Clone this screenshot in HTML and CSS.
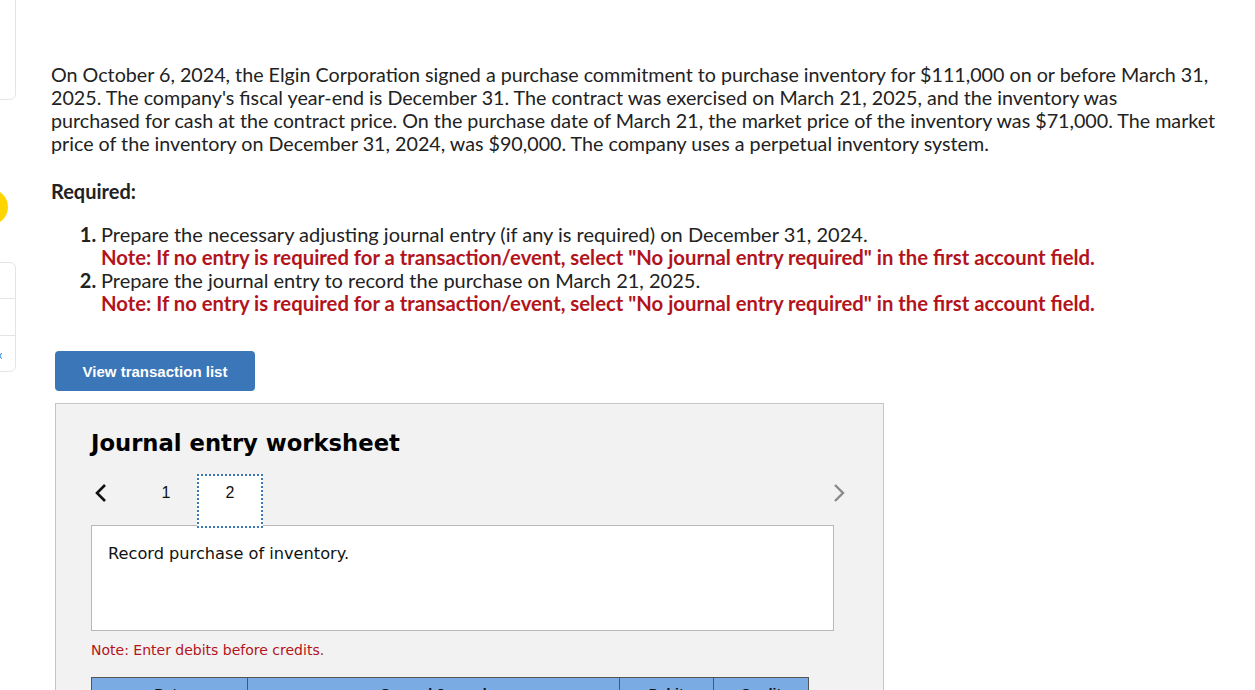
FILE: index.html
```html
<!DOCTYPE html>
<html lang="en">
<head>
    <meta charset="UTF-8">
    <title>Purchase Commitment - Journal Entry</title>
    <link rel="stylesheet" href="styles.css">
</head>
<body>
    <!-- side rail, mostly off screen -->
    <div class="rail">
        <div class="rail-card rail-top"></div>
        <div class="rail-dot"></div>
        <div class="rail-card rail-list">
            <div class="rail-row"></div>
            <div class="rail-row"></div>
            <div class="rail-row rail-last"><span class="rail-arrow">&lsaquo;</span></div>
        </div>
    </div>

    <main class="question">
        <p class="intro">On October 6, 2024, the Elgin Corporation signed a purchase commitment to purchase inventory for $111,000 on or before March 31, 2025. The company's fiscal year-end is December 31. The contract was exercised on March 21, 2025, and the inventory was<br>purchased for cash at the contract price. On the purchase date of March 21, the market price of the inventory was $71,000. The market price of the inventory on December 31, 2024, was $90,000. The company uses a perpetual inventory system.</p>

        <p class="required">Required:</p>
        <ol class="tasks">
            <li>Prepare the necessary adjusting journal entry (if any is required) on December 31, 2024.
                <span class="task-note">Note: If no entry is required for a transaction/event, select "No journal entry required" in the first account field.</span>
            </li>
            <li>Prepare the journal entry to record the purchase on March 21, 2025.
                <span class="task-note">Note: If no entry is required for a transaction/event, select "No journal entry required" in the first account field.</span>
            </li>
        </ol>

        <button class="btn-list" type="button">View transaction list</button>

        <section class="worksheet">
            <h2>Journal entry worksheet</h2>
            <div class="tabs">
                <span class="nav-prev">
                    <svg width="14" height="20" viewBox="0 0 14 20"><path d="M11 2 L3 10 L11 18" fill="none" stroke="#111" stroke-width="2.6"/></svg>
                </span>
                <span class="tab">1</span>
                <span class="tab tab-active">2</span>
                <span class="nav-next">
                    <svg width="14" height="20" viewBox="0 0 14 20"><path d="M3 2 L11 10 L3 18" fill="none" stroke="#8a8a8a" stroke-width="2.4"/></svg>
                </span>
            </div>
            <div class="entry-box">Record purchase of inventory.</div>
            <p class="ws-note">Note: Enter debits before credits.</p>
            <table class="journal">
                <thead>
                    <tr>
                        <th class="col-date">Date</th>
                        <th class="col-account">General Journal</th>
                        <th class="col-debit">Debit</th>
                        <th class="col-credit">Credit</th>
                    </tr>
                </thead>
            </table>
        </section>
    </main>
</body>
</html>
```

FILE: styles.css
```css
body {
    margin: 0;
    background-color: #fff;
    font-family: Lato, "Open Sans", sans-serif;
    color: #222;
    overflow: hidden;
}

/* left rail */
.rail {
    position: fixed;
    top: 0;
    left: 0;
    width: 16px;
}
.rail-card {
    position: absolute;
    right: 0;
    width: 60px;
    border: 1px solid #e4e4e4;
    border-radius: 0 0 6px 0;
    background-color: #fff;
}
.rail-top {
    top: -10px;
    height: 108px;
}
.rail-dot {
    position: absolute;
    top: 189px;
    left: -28px;
    width: 36px;
    height: 36px;
    border-radius: 50%;
    background-color: #ffd500;
}
.rail-list {
    top: 262px;
    border-radius: 0 6px 6px 0;
}
.rail-row {
    height: 36px;
    border-bottom: 1px solid #e4e4e4;
    position: relative;
}
.rail-row:first-child {
    height: 35px;
}
.rail-last {
    height: 35px;
    border-bottom: none;
}
.rail-arrow {
    position: absolute;
    right: 12px;
    top: 8px;
    color: #2a8de0;
    font-size: 16px;
}

/* question */
.question {
    padding: 63px 24px 0 51px;
}
.intro {
    margin: 0;
    max-width: 1172px;
    font-size: 19.7px;
    line-height: 23px;
    color: #222;
}
.required {
    margin: 25px 0 0;
    font-size: 20px;
    font-weight: bold;
    line-height: 23px;
}
.tasks {
    margin: 20px 0 0;
    padding-left: 50px;
    font-size: 20px;
    line-height: 23px;
}
.tasks li::marker {
    font-weight: bold;
}
.task-note {
    display: block;
    color: #b3141c;
    font-weight: bold;
    font-size: 20.3px;
}

.btn-list {
    margin-top: 36px;
    margin-left: 4px;
    width: 200px;
    height: 40px;
    background-color: #3a76b8;
    color: #fff;
    border: none;
    border-radius: 4px;
    font-family: "Liberation Sans", Arial, sans-serif;
    font-weight: bold;
    font-size: 15px;
    cursor: pointer;
}

/* worksheet */
.worksheet {
    margin: 12px 0 0 4px;
    width: 792px;
    height: 320px;
    padding: 22px 0 0 35px;
    background-color: #f2f2f2;
    border: 1px solid #c6c6c6;
    font-family: "DejaVu Sans", Verdana, sans-serif;
}
.worksheet h2 {
    margin: 0;
    font-size: 22.7px;
    line-height: 34px;
    color: #000;
}
.tabs {
    display: flex;
    align-items: flex-start;
    margin-top: 14px;
    width: 755px;
    height: 51px;
}
.nav-prev {
    box-sizing: border-box;
    width: 52px;
    padding: 9px 0 0 3px;
    display: flex;
}
.tab {
    box-sizing: border-box;
    width: 46px;
    height: 52px;
    padding-top: 9px;
    text-align: center;
    font-family: "Liberation Sans", Arial, sans-serif;
    font-size: 16px;
    line-height: 20px;
    color: #111;
}
.tab-active {
    width: 66px;
    height: 54px;
    margin-left: 8px;
    padding-top: 7px;
    background-color: #fff;
    border: 2px dotted #3a76b8;
    position: relative;
}
.nav-next {
    margin-left: auto;
    padding-top: 9px;
    display: flex;
}
.entry-box {
    width: 725px;
    height: 86px;
    padding: 18px 0 0 16px;
    background-color: #fff;
    border: 1px solid #b8b8b8;
    font-size: 16.2px;
    color: #111;
}
.ws-note {
    margin: 10px 0 0;
    font-size: 14px;
    line-height: 18px;
    color: #b3141c;
}
.journal {
    margin-top: 18px;
    border-collapse: collapse;
    width: 718px;
}
.journal th {
    background-color: #7aabe3;
    border: 1px solid #555;
    height: 30px;
    font-family: "Liberation Sans", Arial, sans-serif;
    font-size: 14px;
    color: #111;
}
.col-date { width: 155px; }
.col-account { width: 373px; }
.col-debit { width: 92px; }
.col-credit { width: 93px; }
```
